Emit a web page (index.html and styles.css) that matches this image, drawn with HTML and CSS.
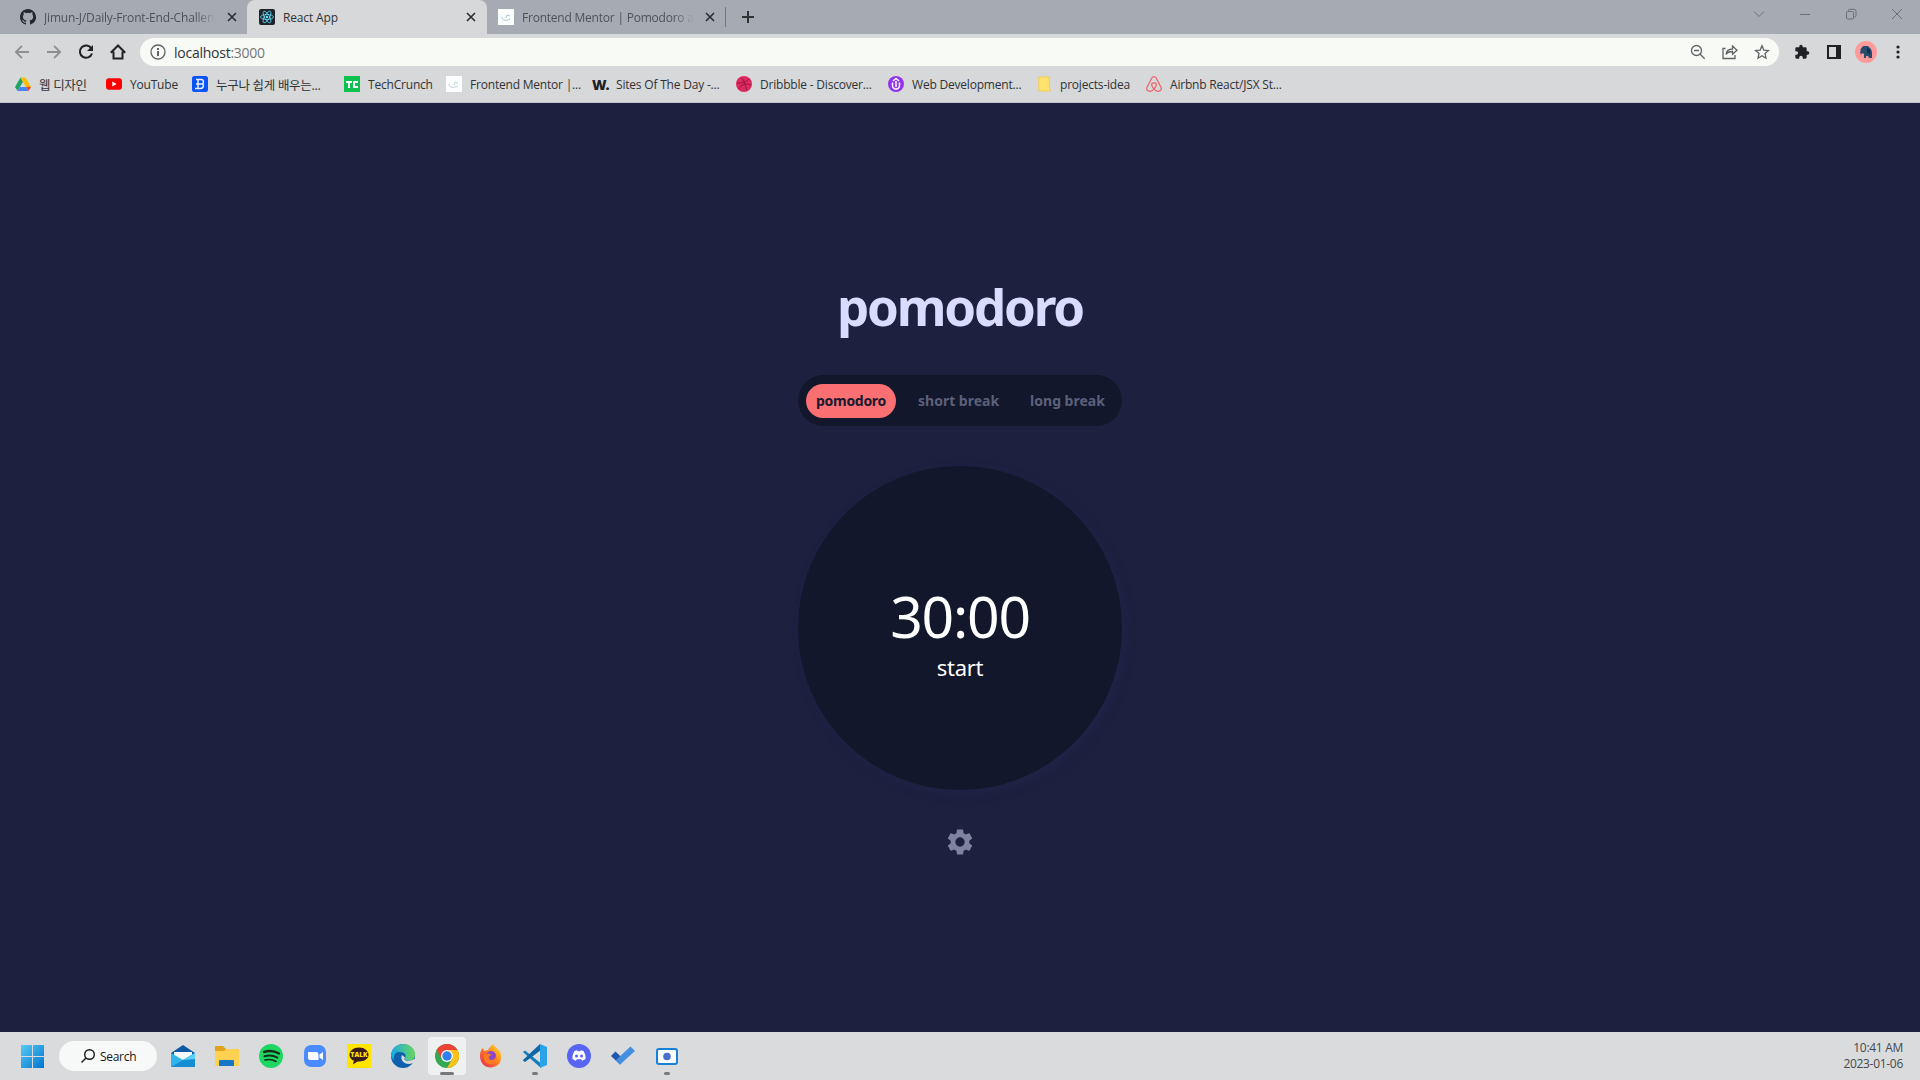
FILE: index.html
```html
<!DOCTYPE html>
<html lang="en">
<head>
<meta charset="utf-8">
<title>React App</title>
<link rel="stylesheet" href="styles.css">
</head>
<body>
<header class="browser">
  <div class="tabstrip">
    <div class="tab tab-first">
      <svg class="fav" viewBox="0 0 16 16"><path fill="#24292f" d="M8 0C3.58 0 0 3.58 0 8c0 3.54 2.29 6.53 5.47 7.59.4.07.55-.17.55-.38v-1.49c-2.01.37-2.53-.49-2.69-.94-.09-.23-.48-.94-.82-1.13-.28-.15-.68-.52-.01-.53.63-.01 1.08.58 1.23.82.72 1.21 1.87.87 2.33.66.07-.52.28-.87.51-1.07-1.78-.2-3.64-.89-3.64-3.95 0-.87.31-1.59.82-2.15-.08-.2-.36-1.02.08-2.12 0 0 .67-.21 2.2.82a7.6 7.6 0 0 1 4 0c1.53-1.04 2.2-.82 2.2-.82.44 1.1.16 1.92.08 2.12.51.56.82 1.27.82 2.15 0 3.07-1.87 3.75-3.65 3.95.29.25.54.73.54 1.48v2.2c0 .21.15.46.55.38A8 8 0 0 0 8 0z"/></svg>
      <span class="tab-title fade t1">Jimun-J/Daily-Front-End-Challenge</span>
      <svg class="x" viewBox="0 0 10 10"><path d="M1 1l8 8M9 1L1 9"/></svg>
    </div>
    <div class="tab tab-active">
      <svg class="fav" viewBox="0 0 16 16"><rect width="16" height="16" rx="2" fill="#20232a"/><g fill="none" stroke="#61dafb" stroke-width=".8"><ellipse cx="8" cy="8" rx="6.5" ry="2.5"/><ellipse cx="8" cy="8" rx="6.5" ry="2.5" transform="rotate(60 8 8)"/><ellipse cx="8" cy="8" rx="6.5" ry="2.5" transform="rotate(120 8 8)"/></g><circle cx="8" cy="8" r="1.3" fill="#61dafb"/></svg>
      <span class="tab-title t2">React App</span>
      <svg class="x" viewBox="0 0 10 10"><path d="M1 1l8 8M9 1L1 9"/></svg>
    </div>
    <div class="tab tab-last">
      <svg class="fav" viewBox="0 0 16 16"><rect width="16" height="16" fill="#fcfdfd"/><path d="M4 8c0 4 5 4 8 2M8 9l1-3 3 1" fill="none" stroke="#a9c6d2"/></svg>
      <span class="tab-title fade t3">Frontend Mentor | Pomodoro app</span>
      <svg class="x" viewBox="0 0 10 10"><path d="M1 1l8 8M9 1L1 9"/></svg>
    </div>
    <svg class="plus" viewBox="0 0 12 12"><path d="M6 0v12M0 6h12"/></svg>
    <div class="window-controls">
      <svg viewBox="0 0 12 12"><path d="M1 3.5l5 5 5-5"/></svg>
      <svg viewBox="0 0 12 12"><path d="M1 6.5h10"/></svg>
      <svg viewBox="0 0 12 12"><rect x="1.5" y="3.5" width="7" height="7.5" rx="1"/><path d="M3.5 3.5V2.3q0-1 1-1H9q2 0 2 2V8q0 1-1.5 1"/></svg>
      <svg viewBox="0 0 12 12"><path d="M1 1l10 10M11 1L1 11"/></svg>
    </div>
  </div>
  <div class="toolbar">
    <div class="nav">
      <svg class="dim" viewBox="0 0 16 16"><path d="M15 8H2M8 1.8L1.8 8 8 14.2"/></svg>
      <svg class="dim" viewBox="0 0 16 16"><path d="M1 8h13M8 1.8L14.2 8 8 14.2"/></svg>
      <svg viewBox="0 0 16 16"><path stroke-width="2" d="M13.4 4.4A6.2 6.2 0 1 0 14 9.5"/><path fill="#202124" stroke="none" d="M15 1v6H9z"/></svg>
      <svg viewBox="0 0 16 16"><path stroke-width="2" d="M3.5 7.5V14.5h9V7.500M.8 8.700L8 1.500l7.200 7.200"/></svg>
    </div>
    <div class="omnibox">
      <svg class="info" viewBox="0 0 16 16"><circle cx="8" cy="8" r="7"/><path stroke-width="2" d="M8 7v5M8 4v2"/></svg>
      <span class="url">localhost<span>:3000</span></span>
      <div class="omni-icons">
        <svg viewBox="0 0 16 16"><circle cx="6.500" cy="6.500" r="5"/><path d="M10.200 10.200l4.500 4.500M4 6.500h5"/></svg>
        <svg viewBox="0 0 16 16"><path d="M3.500 4.500H1V14.500h12V11"/><path d="M4 10.500c.5-4 3-5.500 6.500-5.500V2L15 6.200 10.500 10.300V7.500C7.500 7.500 5.500 8.300 4 10.500z"/></svg>
        <svg viewBox="0 0 16 16"><path d="M8 1.800l1.800 4.300 4.700.4-3.500 3.100 1 4.600-4-2.400-4 2.400 1-4.600L1.500 6.500l4.700-.4z"/></svg>
      </div>
    </div>
    <svg class="tool puzzle" viewBox="0 0 24 24"><path fill="#202124" d="M20.500 11H19V7a2 2 0 0 0-2-2h-4V3.500a2.500 2.500 0 0 0-5 0V5H4a2 2 0 0 0-2 2v3.800h1.500a2.700 2.700 0 0 1 0 5.400H2V20c0 1.100.9 2 2 2h3.800v-1.500a2.700 2.700 0 0 1 5.400 0V22H17a2 2 0 0 0 2-2v-4h1.500a2.500 2.500 0 0 0 0-5z"/></svg>
    <svg class="tool panel" viewBox="0 0 14 14"><path fill="#202124" fill-rule="evenodd" d="M0 0h14v14H0zM2 2v10h7V2z"/></svg>
    <svg class="avatar" viewBox="0 0 22 22"><circle cx="11" cy="11" r="11" fill="#ff9a9a"/><path fill="#264c70" d="M5 9l3-4h5l3 3 1 3v6h-3l-1-2h-2v2H9v-4l-2-1-1 2-1-3 1-2z"/><path fill="#142d4a" d="M12 6l3 3v5l-3-3z"/></svg>
    <svg class="tool dots" viewBox="0 0 4 14"><g fill="#202124"><circle cx="2" cy="2" r="1.600"/><circle cx="2" cy="7" r="1.600"/><circle cx="2" cy="12" r="1.600"/></g></svg>
  </div>
  <nav class="bookmarks">
    <a><svg viewBox="0 0 16 16"><path fill="#1fa463" d="M5.500 1.500L0 11l2.500 4L8 5.700z"/><path fill="#fbbc04" d="M5.500 1.500h5L16 11h-5z"/><path fill="#4285f4" d="M2.500 15L5 11h6l2.500 4z"/><path fill="#ea4335" d="M11 11h5l-2.500 4z"/></svg><span class="b1">웹 디자인</span></a>
    <a><svg viewBox="0 0 16 16"><rect y="2.300" width="16" height="11.500" rx="3" fill="#f00"/><path fill="#fff" d="M6.300 5.500v5L10.600 8z"/></svg><span class="b2">YouTube</span></a>
    <a><svg viewBox="0 0 16 16"><rect width="16" height="16" rx="2.500" fill="#0a54f5"/><path d="M4 3.500h5q3.500 0 2 4 1.500 5-3 5H3M6 4v8M4 8h7" fill="none" stroke="#e8f0ff" stroke-width="1.500"/></svg><span class="b3">누구나 쉽게 배우는...</span></a>
    <a><svg viewBox="0 0 16 16"><rect width="16" height="16" fill="#0cc24e"/><path d="M2 6h6M5 6v6M14 6h-4v5h4" fill="none" stroke="#fff" stroke-width="2"/></svg><span class="b4">TechCrunch</span></a>
    <a><svg viewBox="0 0 16 16"><rect width="16" height="16" fill="#fcfdfd"/><path d="M3 8c0 4 5 4 9 2M8 9l1-3 3 1" fill="none" stroke="#c0d3df"/></svg><span class="b5">Frontend Mentor |...</span></a>
    <a><b class="w-mark">W.</b><span class="b6">Sites Of The Day -...</span></a>
    <a><svg viewBox="0 0 16 16"><circle cx="8" cy="8" r="8" fill="#e0295f"/><g fill="none" stroke="#8d1b42"><path d="M5 1.500c3 3 5 7.500 5.500 13M1 7c5 .5 9-1 12-4M3 13c2-5 7-6 12-4"/></g></svg><span class="b7">Dribbble - Discover...</span></a>
    <a><svg viewBox="0 0 16 16"><circle cx="8" cy="8" r="8" fill="#9333ea"/><path d="M4.500 6.500v3a3.500 3.500 0 0 0 7 0v-3M5 5l3-2.500L11 5M8 5v6" fill="none" stroke="#fff" stroke-width="1.500"/></svg><span class="b8">Web Development...</span></a>
    <a><svg class="note" viewBox="0 0 16 16"><path fill="#ffe36c" stroke="#efcc5b" d="M.8 1h10.500v10l1 4H.8z"/></svg><span class="b9">projects-idea</span></a>
    <a><svg viewBox="0 0 16 16"><path d="M8 13C4.800 9.500 5 6.800 8 6.800s3.200 2.700 0 6.200c-2.800 3.500-8 2.800-7.200-1.200L5.700 2.200Q8-1 10.300 2.200l4.900 9.600c.8 4-4.400 4.700-7.200 1.200z" fill="none" stroke="#f15e66" stroke-width="1.200"/></svg><span class="b10">Airbnb React/JSX St...</span></a>
  </nav>
</header>

<main class="app">
  <h1>pomodoro</h1>
  <div class="modes">
    <button class="mode selected">pomodoro</button>
    <button class="mode short">short break</button>
    <button class="mode long">long break</button>
  </div>
  <div class="timer">
    <div class="time">30:00</div>
    <div class="action">start</div>
  </div>
  <svg class="gear" viewBox="2 2 20 20"><path d="M19.140 12.940c.04-.3.060-.61.060-.94s-.020-.64-.07-.94l2.030-1.580a.49.49 0 0 0 .12-.61l-1.920-3.320a.49.49 0 0 0-.59-.22l-2.390.96a7 7 0 0 0-1.620-.94l-.36-2.540a.48.48 0 0 0-.48-.41h-3.840a.48.48 0 0 0-.47.41l-.36 2.540c-.59.24-1.130.57-1.620.94l-2.390-.96a.48.48 0 0 0-.59.22L2.740 8.870a.48.48 0 0 0 .12.610l2.030 1.580a6 6 0 0 0 0 1.880l-2.030 1.580a.49.49 0 0 0-.12.610l1.920 3.320c.12.220.37.290.59.220l2.390-.96c.5.380 1.030.7 1.620.94l.36 2.540c.05.240.24.410.48.410h3.840c.24 0 .44-.17.470-.41l.36-2.540a7 7 0 0 0 1.620-.94l2.390.96c.22.080.47 0 .59-.22l1.920-3.320a.48.48 0 0 0-.12-.61zM12 15.600a3.600 3.600 0 1 1 0-7.200 3.600 3.600 0 0 1 0 7.200z"/></svg>
</main>

<footer class="taskbar">
  <div class="dock">
    <svg class="start" viewBox="0 0 23 23"><defs><linearGradient id="win" x2="1" y2="1"><stop stop-color="#55cbf4"/><stop offset="1" stop-color="#0074cf"/></linearGradient></defs><path fill="url(#win)" d="M0 0h11v11H0zM12 0h11v11H12zM0 12h11v11H0zM12 12h11v11H12z"/></svg>
    <div class="search"><svg viewBox="0 0 14 14"><circle cx="8.500" cy="5.500" r="4.800"/><path d="M5 9l-4.500 4.500"/></svg><span>Search</span></div>
    <div class="apps">
      <div class="slot"><svg viewBox="0 0 24 24"><path fill="#0e59a5" d="M0 9l12-8 12 8v5H0z"/><path fill="#f2f8fc" d="M3 8h18v8H3z"/><path fill="#31b4ec" d="M0 9l12 7L24 9v14H0z"/><path fill="#168ed4" d="M0 23L24 9v14z"/><path fill="#5dd0f5" d="M12 16l12-7v6z"/></svg></div>
      <div class="slot"><svg viewBox="0 0 24 24"><path fill="#e0a11b" d="M0 3q0-1 1-1h7l3 3h11v8H0z"/><path fill="#ffd150" d="M0 7h9l2-2h12q1 0 1 1v16H0z"/><path fill="#1677c5" d="M4 22v-5q0-1 1-1h13q1 0 1 1v5z"/></svg></div>
      <div class="slot"><svg viewBox="0 0 24 24"><circle cx="12" cy="12" r="12" fill="#1ed760"/><g fill="none" stroke="#142b1c" stroke-linecap="round"><path stroke-width="2.400" d="M5 8q8-2.500 15 1.500"/><path stroke-width="2" d="M5.500 12.300q7-2 12.800 1.300"/><path stroke-width="1.700" d="M6 16q6-1.500 11 1.400"/></g></svg></div>
      <div class="slot"><svg viewBox="0 0 24 24"><rect x="1" y="1" width="22" height="22" rx="7" fill="#4a8cff"/><path fill="#fff" d="M5 8h8q2.500 0 2.500 2.500V16h-8Q5 16 5 13.500zM16.500 10.500L20 8v8l-3.500-2.500z"/></svg></div>
      <div class="slot"><svg viewBox="0 0 24 24"><path fill="#ffe500" d="M0 0h24v24H0z"/><path fill="#391b1b" d="M12 3.500c-5.500 0-9.500 3.300-9.500 7.300 0 2.700 1.700 4.700 4.300 6L6 20.500l4.500-3H12c5.500 0 9.500-2.700 9.500-6.700S17.500 3.500 12 3.500z"/><text class="talk" x="12" y="13.400" text-anchor="middle">TALK</text></svg></div>
      <div class="slot"><svg viewBox="0 0 24 24"><defs><linearGradient id="ed"><stop stop-color="#20a9e1"/><stop offset="1" stop-color="#66d95a"/></linearGradient></defs><circle cx="12" cy="12" r="12" fill="#0e62ad"/><path fill="url(#ed)" d="M.2 10C1.500 3.500 6.500 0 12 0c7 0 12 5 12 10.500 0 4-3 6-6.500 6-3 0-4.500-1.200-3.500-2.500 2-3-.5-6-5-6-4 0-8 1.500-8.800 2z"/><path fill="#16b0dd" d="M0 12c0-5 5-7 9-5-5 1-7 5-6 10z"/><path fill="#d9dbdc" d="M11 11c-2 4 1 9 7 9 2 0 4-.7 5.500-2L22 22l2 2h1v-8l-2-1q-2 1.700-6 1.700c-3 0-4.500-1.200-3-3.200z"/></svg></div>
      <div class="slot current"><svg viewBox="0 0 24 24"><circle cx="12" cy="12" r="12" fill="#34a853"/><path fill="#ea4335" d="M1.600 6A12 12 0 0 1 22.400 6H12L6.800 15z"/><path fill="#fbc116" d="M22.400 6A12 12 0 0 1 12 24l5.200-9L12 6z"/><circle cx="12" cy="12" r="6" fill="#fff"/><circle cx="12" cy="12" r="4.700" fill="#307ff0"/></svg></div>
      <div class="slot"><svg viewBox="0 0 24 24"><defs><linearGradient id="ff" x1="1" x2="0" y2="1"><stop stop-color="#ffe52c"/><stop offset=".5" stop-color="#ff7b20"/><stop offset="1" stop-color="#e91e63"/></linearGradient></defs><path fill="url(#ff)" d="M1 12c0-4 1-6 3-8l1 3 4-1c1-3 4-4 5-6 1 3 7 5 8 10v4c0 6-5 9.500-10.500 9.500S1 19 1 12z"/><circle cx="12" cy="12" r="5" fill="#8b46cc"/><path fill="#ff7b20" d="M5 11q4-3 8 0l-3 1q-1 3 2 4c3 0 5-2 5-4 2 5-2 8-6 8s-7-4-6-9z"/></svg></div>
      <div class="slot open"><svg viewBox="0 0 24 24"><path fill="#147bbd" d="M0 8l2-1.600 16 13V24L1 9z"/><path fill="#0e67a5" d="M0 16L17 0l1 6L2 18l-2-1.500z"/><path fill="#2aa3e8" d="M17 0l7 3v18l-7 3z"/></svg></div>
      <div class="slot"><svg viewBox="0 0 24 24"><circle cx="12" cy="12" r="12" fill="#5865f2"/><path fill="#fff" d="M7.500 7q1.500-.8 2.700-.8l.5 1h2.600l.5-1q1.200 0 2.700.8c1.500 2.500 2.300 5 2 8q-1.500 1.300-3.500 1.700l-.8-1.400H9.800L9 16.700Q7 16.300 5.500 15c-.3-3 .5-5.500 2-8z"/><circle cx="9.500" cy="12" r="1.500" fill="#5865f2"/><circle cx="14.500" cy="12" r="1.500" fill="#5865f2"/></svg></div>
      <div class="slot"><svg viewBox="0 0 24 24"><path fill="#2057ad" d="M0 12l4.500-4.500L13.500 16 9 20.500z"/><path fill="#448fe2" d="M9 20.500L4.700 16.200 19.500 2.500 24 7z"/></svg></div>
      <div class="slot open"><svg viewBox="0 0 24 24"><rect x="1" y="4" width="22" height="17" rx="3" fill="#1781d7"/><rect x="3" y="6" width="18" height="13" rx="1" fill="#fafcff"/><circle cx="12" cy="12.500" r="3.800" fill="#4b6dcc"/></svg></div>
    </div>
  </div>
  <div class="clock"><div>10:41 AM</div><div class="date">2023-01-06</div></div>
</footer>
</body>
</html>
```
FILE: styles.css
```css
* { box-sizing: border-box; }

body {
  margin: 0;
  width: 1920px;
  height: 1080px;
  overflow: hidden;
  display: flex;
  flex-direction: column;
  font-family: "Open Sans", "Noto Sans CJK KR", sans-serif;
  font-size: 12px;
  color: #303336;
}

svg { display: block; flex: none; }

/* Browser chrome */
.browser {
  height: 103px;
  background: #d6d8d9;
  border-bottom: 1px solid #c2c4ca;
}

.tabstrip {
  height: 34px;
  display: flex;
  background: #a6abb3;
}

.tab {
  height: 34px;
  display: flex;
  align-items: center;
}

.tab-first { width: 247px; padding-left: 20px; }
.tab-active {
  width: 240px;
  padding-left: 12px;
  background: #d6d8d9;
  border-radius: 8px 8px 0 0;
}
.tab-last { width: 239px; padding-left: 11px; }
.tab-last::after {
  content: "";
  width: 1px;
  height: 20px;
  margin-left: 10px;
  background: #74787e;
}

.fav { width: 16px; height: 16px; }

.tab-title {
  margin-left: 8px;
  white-space: nowrap;
  overflow: hidden;
}
.tab-first .tab-title, .tab-last .tab-title { color: #4e5257; }
.t1 { width: 172px; letter-spacing: -0.18px; }
.t2 { width: 180px; letter-spacing: -0.15px; }
.t3 { width: 172px; letter-spacing: -0.22px; }
.fade {
  -webkit-mask-image: linear-gradient(90deg, #000 88%, transparent);
  mask-image: linear-gradient(90deg, #000 88%, transparent);
}

.x { width: 10px; height: 10px; margin-left: 11px; fill: none; stroke: #292c2f; stroke-width: 1.6; }
.tab-active .x { margin-left: 4px; margin-right: auto; }
.tab-active .x { margin-left: 3px; }

.plus { width: 12px; height: 12px; margin: 11px 0 0 16px; fill: none; stroke: #303236; stroke-width: 2; }

.window-controls {
  display: flex;
  gap: 34px;
  margin-left: auto;
  padding: 8px 17px 0 0;
}
.window-controls svg { width: 12px; height: 12px; fill: none; stroke: #6b6f76; }

.toolbar {
  height: 36px;
  display: flex;
  align-items: center;
}

.nav { width: 140px; display: flex; gap: 16px; padding-left: 14px; }
.nav svg { width: 16px; height: 16px; fill: none; stroke: #202124; stroke-width: 1.8; }
.nav .dim { stroke: #8d8f90; }

.omnibox {
  width: 1639px;
  height: 28px;
  border-radius: 14px;
  background: #f8faf5;
  display: flex;
  align-items: center;
  padding: 0 9px 0 10px;
}
.info { width: 16px; height: 16px; fill: none; stroke: #5f6368; stroke-width: 1.3; }
.url { margin-left: 8px; font-size: 14px; letter-spacing: -0.25px; }
.url span { color: #74777a; }
.omni-icons { display: flex; gap: 16px; margin-left: auto; }
.omni-icons svg { width: 16px; height: 16px; fill: none; stroke: #5f6368; stroke-width: 1.3; }

.tool { height: 14px; }
.puzzle { width: 16px; height: 16px; margin-left: 15px; }
.panel { width: 14px; margin-left: 17px; }
.avatar { width: 22px; height: 22px; margin-left: 14px; }
.dots { width: 4px; margin-left: 19px; }

.bookmarks {
  display: grid;
  grid-template-columns: 91px 86px 152px 102px 146px 144px 152px 150px 108px 160px;
  padding-left: 15px;
  height: 28px;
}
.bookmarks a { display: flex; align-items: center; gap: 8px; white-space: nowrap; }
.bookmarks svg { width: 16px; height: 16px; }
.bookmarks .note { margin-right: -2px; }
.w-mark { width: 16px; font-size: 14px; font-weight: 800; letter-spacing: -1px; color: #202124; }
.b1, .b3 { font-size: 12.5px; letter-spacing: -0.3px; }
.b2, .b4, .b5, .b6, .b7, .b8, .b9, .b10 { letter-spacing: -0.2px; }

/* Timer */
.app {
  height: 929px;
  background: #1d203f;
  display: flex;
  flex-direction: column;
  align-items: center;
  font-family: "Noto Sans", sans-serif;
}

h1 {
  margin: 169px 0 0;
  height: 68px;
  line-height: 68px;
  font-size: 51px;
  font-weight: 700;
  letter-spacing: -2.2px;
  color: #d8dcff;
}

.modes {
  width: 324px;
  height: 51px;
  margin-top: 35px;
  padding: 0 8px;
  display: flex;
  align-items: center;
  border-radius: 26px;
  background: #12172b;
}
.mode {
  height: 34px;
  padding: 0;
  border: 0;
  border-radius: 17px;
  background: none;
  font: 700 14px/34px "Noto Sans", sans-serif;
  color: #5c607a;
  white-space: nowrap;
}
.selected { width: 90px; background: #fa7072; color: #171930; letter-spacing: -0.3px; }
.short { width: 80px; margin-left: 22px; }
.long { width: 75px; margin-left: 32px; }

.timer {
  width: 324px;
  height: 324px;
  margin-top: 40px;
  padding-top: 112px;
  border-radius: 50%;
  background: #12172b;
  box-shadow: 4px 4px 8px #25265080;
  text-align: center;
  color: #fff;
}
.time { height: 76px; line-height: 76px; font-size: 57px; letter-spacing: -1.2px; }
.action { height: 26px; line-height: 26px; font-size: 22px; letter-spacing: -0.3px; }

.gear { width: 26px; height: 26px; margin-top: 39px; fill: #7e84a0; }

/* Taskbar */
.taskbar {
  height: 48px;
  display: flex;
  justify-content: space-between;
  align-items: center;
  background: #d9dbdd;
  padding-right: 17px;
}
.dock { display: flex; align-items: center; padding-left: 21px; }
.start { width: 23px; height: 23px; }
.search {
  width: 98px;
  height: 30px;
  margin-left: 15px;
  border-radius: 15px;
  background: #f7f8f8;
  display: flex;
  align-items: center;
  gap: 5px;
  padding-left: 22px;
  color: #18191b;
}
.search svg { width: 14px; height: 14px; fill: none; stroke: #18191b; stroke-width: 1.4; }
.search span { letter-spacing: -0.3px; }

.apps { display: flex; gap: 6px; margin-left: 7px; }
.slot {
  width: 38px;
  height: 38px;
  padding-top: 7px;
  display: flex;
  flex-direction: column;
  align-items: center;
  border-radius: 4px;
}
.slot svg { width: 24px; height: 24px; }
.current { background: #eff0f0; }
.open::after, .current::after {
  content: "";
  width: 6px;
  height: 3px;
  margin-top: 4px;
  border-radius: 2px;
  background: #777a7d;
}
.current::after { width: 14px; }
.talk { font: 800 6.500px "Open Sans", sans-serif; fill: #ffe500; }

.clock { text-align: right; line-height: 16px; color: #46494c; letter-spacing: -0.3px; }
```
